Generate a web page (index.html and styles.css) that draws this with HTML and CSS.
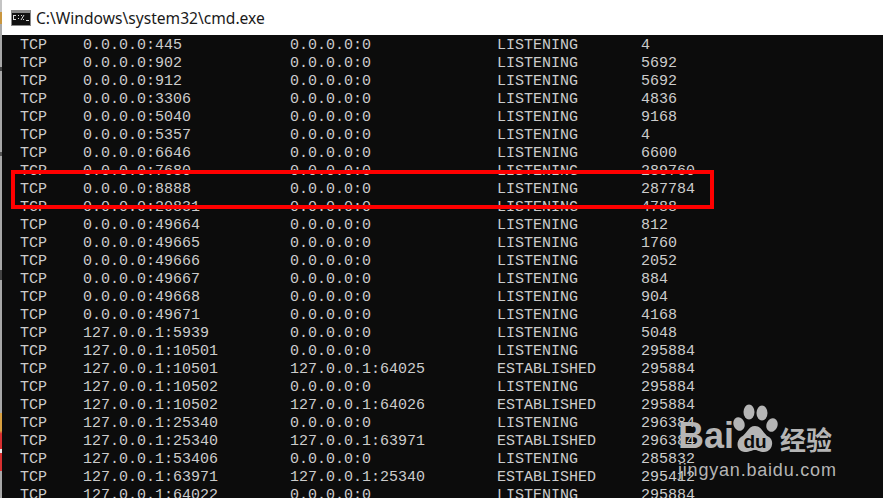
FILE: index.html
```html
<!DOCTYPE html>
<html lang="en">
<head>
<meta charset="utf-8">
<title>cmd.exe</title>
<link rel="stylesheet" href="styles.css">
</head>
<body>
<div class="window">
  <header class="titlebar">
    <svg class="appicon" width="20" height="16" viewBox="0 0 20 16"><rect width="20" height="16" fill="#8a8a8a"/><rect x="1" y="3" width="18" height="12" fill="#111"/><rect x="2" y="5" width="3" height="1" fill="#ddd"/><rect x="2" y="6" width="1" height="3" fill="#ddd"/><rect x="2" y="9" width="3" height="1" fill="#ddd"/><rect x="7" y="5" width="1" height="1" fill="#ddd"/><rect x="7" y="8" width="1" height="1" fill="#ddd"/><path d="M10 10 L13 5 M10 5.5h1 M12 9.5h1" stroke="#ddd" stroke-width="1" fill="none"/><rect x="15" y="10" width="3" height="1" fill="#ddd"/></svg>
    <span class="titletext">C:\Windows\system32\cmd.exe</span>
  </header>
  <main class="console">
    <div class="row"><span>TCP</span><span>0.0.0.0:445</span><span>0.0.0.0:0</span><span>LISTENING</span><span>4</span></div>
    <div class="row"><span>TCP</span><span>0.0.0.0:902</span><span>0.0.0.0:0</span><span>LISTENING</span><span>5692</span></div>
    <div class="row"><span>TCP</span><span>0.0.0.0:912</span><span>0.0.0.0:0</span><span>LISTENING</span><span>5692</span></div>
    <div class="row"><span>TCP</span><span>0.0.0.0:3306</span><span>0.0.0.0:0</span><span>LISTENING</span><span>4836</span></div>
    <div class="row"><span>TCP</span><span>0.0.0.0:5040</span><span>0.0.0.0:0</span><span>LISTENING</span><span>9168</span></div>
    <div class="row"><span>TCP</span><span>0.0.0.0:5357</span><span>0.0.0.0:0</span><span>LISTENING</span><span>4</span></div>
    <div class="row"><span>TCP</span><span>0.0.0.0:6646</span><span>0.0.0.0:0</span><span>LISTENING</span><span>6600</span></div>
    <div class="row"><span>TCP</span><span>0.0.0.0:7680</span><span>0.0.0.0:0</span><span>LISTENING</span><span>289760</span></div>
    <div class="row"><span>TCP</span><span>0.0.0.0:8888</span><span>0.0.0.0:0</span><span>LISTENING</span><span>287784</span></div>
    <div class="row"><span>TCP</span><span>0.0.0.0:20831</span><span>0.0.0.0:0</span><span>LISTENING</span><span>4788</span></div>
    <div class="row"><span>TCP</span><span>0.0.0.0:49664</span><span>0.0.0.0:0</span><span>LISTENING</span><span>812</span></div>
    <div class="row"><span>TCP</span><span>0.0.0.0:49665</span><span>0.0.0.0:0</span><span>LISTENING</span><span>1760</span></div>
    <div class="row"><span>TCP</span><span>0.0.0.0:49666</span><span>0.0.0.0:0</span><span>LISTENING</span><span>2052</span></div>
    <div class="row"><span>TCP</span><span>0.0.0.0:49667</span><span>0.0.0.0:0</span><span>LISTENING</span><span>884</span></div>
    <div class="row"><span>TCP</span><span>0.0.0.0:49668</span><span>0.0.0.0:0</span><span>LISTENING</span><span>904</span></div>
    <div class="row"><span>TCP</span><span>0.0.0.0:49671</span><span>0.0.0.0:0</span><span>LISTENING</span><span>4168</span></div>
    <div class="row"><span>TCP</span><span>127.0.0.1:5939</span><span>0.0.0.0:0</span><span>LISTENING</span><span>5048</span></div>
    <div class="row"><span>TCP</span><span>127.0.0.1:10501</span><span>0.0.0.0:0</span><span>LISTENING</span><span>295884</span></div>
    <div class="row"><span>TCP</span><span>127.0.0.1:10501</span><span>127.0.0.1:64025</span><span>ESTABLISHED</span><span>295884</span></div>
    <div class="row"><span>TCP</span><span>127.0.0.1:10502</span><span>0.0.0.0:0</span><span>LISTENING</span><span>295884</span></div>
    <div class="row"><span>TCP</span><span>127.0.0.1:10502</span><span>127.0.0.1:64026</span><span>ESTABLISHED</span><span>295884</span></div>
    <div class="row"><span>TCP</span><span>127.0.0.1:25340</span><span>0.0.0.0:0</span><span>LISTENING</span><span>296384</span></div>
    <div class="row"><span>TCP</span><span>127.0.0.1:25340</span><span>127.0.0.1:63971</span><span>ESTABLISHED</span><span>296384</span></div>
    <div class="row"><span>TCP</span><span>127.0.0.1:53406</span><span>0.0.0.0:0</span><span>LISTENING</span><span>285832</span></div>
    <div class="row"><span>TCP</span><span>127.0.0.1:63971</span><span>127.0.0.1:25340</span><span>ESTABLISHED</span><span>295412</span></div>
    <div class="row"><span>TCP</span><span>127.0.0.1:64022</span><span>0.0.0.0:0</span><span>LISTENING</span><span>295884</span></div>
    <div class="highlight"></div>
    <div class="watermark">
      <div class="wm-top">
        <span class="wm-bai">Bai</span>
        <svg class="paw" width="46" height="50" viewBox="0 0 46 50"><ellipse cx="7" cy="20" rx="5.5" ry="7" fill="#b5b5b5" transform="rotate(-20 7 20)"/><ellipse cx="17" cy="8" rx="5.5" ry="7.5" fill="#b5b5b5"/><ellipse cx="30" cy="9" rx="5.5" ry="7.5" fill="#b5b5b5"/><ellipse cx="40" cy="21" rx="5.5" ry="7" fill="#b5b5b5" transform="rotate(20 40 21)"/><path d="M23 22 C30 22 31 30 37 33 C43 37 40 48 32 48 C27 48 26 46 23 46 C20 46 18 48 13 48 C5 48 3 38 9 33 C15 30 16 22 23 22 Z" fill="#b5b5b5"/><text x="23" y="44" class="paw-du">du</text></svg>
        <span class="wm-cn">经验</span>
      </div>
      <div class="wm-url">jingyan.baidu.com</div>
    </div>
  </main>
</div>
</body>
</html>
```
FILE: styles.css
```css
html, body {
  margin: 0;
  padding: 0;
  height: 100%;
  overflow: hidden;
  background: #0c0c0c;
}
.window {
  display: flex;
  flex-direction: column;
  width: 883px;
  height: 498px;
  overflow: hidden;
}
.titlebar {
  flex: 0 0 35px;
  display: flex;
  align-items: center;
  gap: 5px;
  padding-left: 9px;
  background: #fff;
  box-sizing: border-box;
  border-left: 2px solid;
  border-image: linear-gradient(to bottom, #c4c4c4 12px, #c9963f 12px, #c9963f 24px, #a8a8a8 24px) 1;
}
.appicon { flex: none; }
.titletext {
  font: 15.6px "Noto Sans", "Liberation Sans", sans-serif;
  color: #1a1a1a;
}
.console {
  position: relative;
  flex: 1;
  overflow: hidden;
  background: #0c0c0c;
  border-left: 2px solid;
  border-image: linear-gradient(to bottom,
    #a8a8a8 33px, #444 33px, #444 37px, #a8a8a8 37px,
    #a8a8a8 117px, #555 117px, #555 121px, #a8a8a8 121px,
    #a8a8a8 235px, #444 235px, #444 245px, #a8a8a8 245px,
    #a8a8a8 377px, #d9a040 377px, #d9a040 395px,
    #d83030 398px, #d83030 413px, #e8e8e8 413px, #e8e8e8 417px,
    #d83030 417px, #d83030 435px, #a8a8a8 435px) 1;
  padding-top: 2px;
  font: 15px/18px "Liberation Mono", monospace;
  color: #cccccc;
}
.row {
  display: grid;
  grid-template-columns: 63px 207px 207px 144px 1fr;
  height: 18px;
  padding-left: 18px;
  white-space: pre;
}
.highlight {
  position: absolute;
  left: 9px;
  top: 135px;
  width: 703px;
  height: 39px;
  box-sizing: border-box;
  border: 4px solid #ff0000;
}
.watermark {
  position: absolute;
  left: 676px;
  top: 369px;
  color: #b5b5b5;
  font-family: "Liberation Sans", sans-serif;
}
.wm-top {
  display: flex;
  align-items: flex-end;
}
.wm-bai {
  font-size: 36px;
  line-height: 36px;
  font-weight: 700;
}
.paw { flex: none; margin: 0 2px 0 -2px; }
.paw-du {
  font: 700 19px "Liberation Sans", sans-serif;
  fill: #0c0c0c;
  text-anchor: middle;
}
.wm-cn {
  font: 700 26px/30px "Noto Sans CJK SC", sans-serif;
}
.wm-url {
  font-size: 18px;
  line-height: 20px;
  margin-top: 6px;
  text-align: right;
  letter-spacing: 0.8px;
}
```
